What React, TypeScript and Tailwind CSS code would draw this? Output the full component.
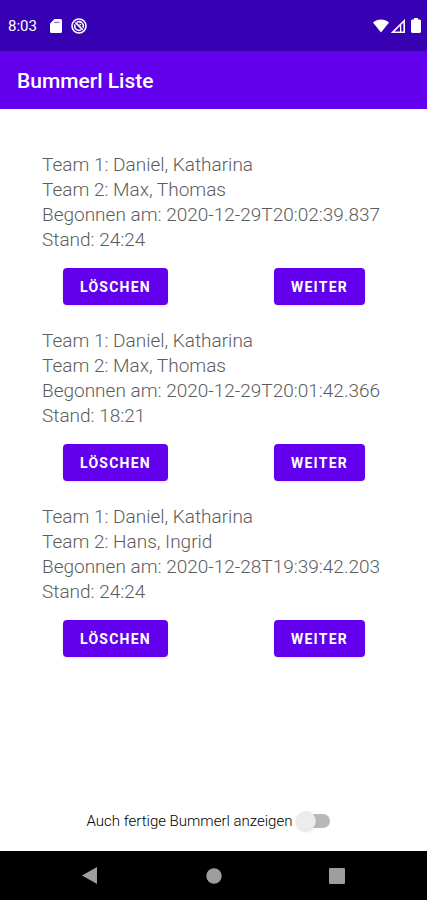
import { useState } from 'react';

interface Bummerl {
  id: number;
  team1: string;
  team2: string;
  startedAt: string;
  score: string;
}

const INITIAL_LIST: Bummerl[] = [
  { id: 1, team1: 'Daniel, Katharina', team2: 'Max, Thomas', startedAt: '2020-12-29T20:02:39.837', score: '24:24' },
  { id: 2, team1: 'Daniel, Katharina', team2: 'Max, Thomas', startedAt: '2020-12-29T20:01:42.366', score: '18:21' },
  { id: 3, team1: 'Daniel, Katharina', team2: 'Hans, Ingrid', startedAt: '2020-12-28T19:39:42.203', score: '24:24' },
];

function StatusBar() {
  return (
    <div className="flex h-[51px] flex-none items-center bg-[#3700b3] pr-[6px] pl-2 text-white">
      <span className="text-[15px] leading-5">8:03</span>
      {/* SD card */}
      <svg aria-hidden="true" className="ml-[13px] h-[14px] w-3" viewBox="0 0 12 14">
        <path d="M4.5 0H10.5Q12 0 12 1.5V12.5Q12 14 10.5 14H1.5Q0 14 0 12.5V4.5Z" fill="#fff" />
        <path d="M4.2 3.4H9.6" stroke="#3700b3" strokeOpacity=".55" strokeWidth="1.4" />
      </svg>
      <svg aria-hidden="true" className="ml-[9px] h-4 w-4" viewBox="0 0 16 16" fill="none" stroke="#fff">
        <circle cx="8" cy="8" r="7" strokeWidth="1.6" />
        <path d="M6 4.2A4.3 4.3 0 0 1 12 9.6M10 11.8A4.3 4.3 0 0 1 4 6.4" strokeWidth="1.5" />
        <path d="M4.4 4.4L11.8 11.8" strokeWidth="1.8" />
        <path d="M8.6 5.8L10 7.2" strokeWidth="1.2" />
      </svg>
      <svg aria-hidden="true" className="ml-auto h-[14px] w-4" viewBox="0 0 16 14">
        <path d="M8 13.6L0 3.6Q3.4 .4 8 .4T16 3.6Z" fill="#fff" />
      </svg>
      <svg aria-hidden="true" className="ml-[2px] h-[14px] w-[14px]" viewBox="0 0 14 14">
        <path d="M1.8 13.2H13.2V1.8Z" fill="none" stroke="#fff" strokeWidth="1.6" />
        <path d="M9.6 6V13.2" stroke="#fff" strokeWidth="1.3" />
      </svg>
      <svg aria-hidden="true" className="ml-[6px] h-[15px] w-[10px]" viewBox="0 0 10 15">
        <path d="M3 0H7V1.6H8.6Q10 1.6 10 3V13.6Q10 15 8.6 15H1.4Q0 15 0 13.6V3Q0 1.6 1.4 1.6H3Z" fill="#fff" />
      </svg>
    </div>
  );
}

function ActionButton({ label, onClick }: { label: string; onClick?: () => void }) {
  return (
    <button
      type="button"
      onClick={onClick}
      className="h-[37px] rounded-[4px] bg-[#6200ee] px-[17px] text-[14px] leading-5 font-bold tracking-[0.089em] text-white uppercase shadow-sm"
    >
      {label}
    </button>
  );
}

function BummerlItem({ item, onDelete }: { item: Bummerl; onDelete: (id: number) => void }) {
  return (
    <li>
      <div className="px-[42px] text-[19px] leading-[25px] font-light text-[#5c5c5c]">
        <p>Team 1: {item.team1}</p>
        <p>Team 2: {item.team2}</p>
        <p className="whitespace-nowrap">Begonnen am: {item.startedAt}</p>
        <p>Stand: {item.score}</p>
      </div>
      <div className="mt-4 flex justify-between pr-[62px] pl-[63px]">
        <ActionButton label="Löschen" onClick={() => onDelete(item.id)} />
        <ActionButton label="Weiter" />
      </div>
    </li>
  );
}

function NavigationBar() {
  return (
    <nav className="flex h-[49px] flex-none items-center justify-between bg-black px-[82px]">
      <button type="button" aria-label="Zurück">
        <svg className="h-[17px] w-4" viewBox="0 0 16 17">
          <path d="M0 8.5L15 0V17Z" fill="#9e9e9e" />
        </svg>
      </button>
      <button type="button" aria-label="Startseite">
        <svg className="h-4 w-4" viewBox="0 0 16 16">
          <circle cx="8" cy="8" r="7.7" fill="#9e9e9e" />
        </svg>
      </button>
      <button type="button" aria-label="Übersicht">
        <svg className="h-4 w-4" viewBox="0 0 16 16">
          <rect width="16" height="16" rx="1" fill="#9e9e9e" />
        </svg>
      </button>
    </nav>
  );
}

export default function App() {
  const [list, setList] = useState(INITIAL_LIST);
  const [showFinished, setShowFinished] = useState(false);

  const handleDelete = (id: number) => setList((prev) => prev.filter((b) => b.id !== id));

  return (
    <div className="flex min-h-screen flex-col bg-white font-[Roboto,sans-serif]">
      <StatusBar />
      <header className="flex h-[58px] flex-none items-center bg-[#6200ee] px-[17px] pt-[2px]">
        <h1 className="text-[21px] leading-7 font-medium text-white">Bummerl Liste</h1>
      </header>

      <main className="flex flex-1 flex-col">
        <ul className="flex flex-1 flex-col gap-[23px] pt-[43px]">
          {list.map((item) => (
            <BummerlItem key={item.id} item={item} onDelete={handleDelete} />
          ))}
        </ul>
        <label className="flex items-center justify-center gap-1 pr-[10px] pb-5 text-[15px] leading-5 font-light text-black">
          Auch fertige Bummerl anzeigen
          <input
            type="checkbox"
            role="switch"
            checked={showFinished}
            onChange={(e) => setShowFinished(e.target.checked)}
            className="relative h-5 w-[34px] appearance-none before:absolute before:top-[3px] before:right-0 before:h-[14px] before:w-[30px] before:rounded-full before:bg-[#b8b8b8] after:absolute after:top-0 after:left-0 after:h-5 after:w-5 after:rounded-full after:bg-[#ececec] after:shadow-sm checked:after:left-[14px] checked:after:bg-[#6200ee]"
          />
        </label>
      </main>

      <NavigationBar />
    </div>
  );
}
